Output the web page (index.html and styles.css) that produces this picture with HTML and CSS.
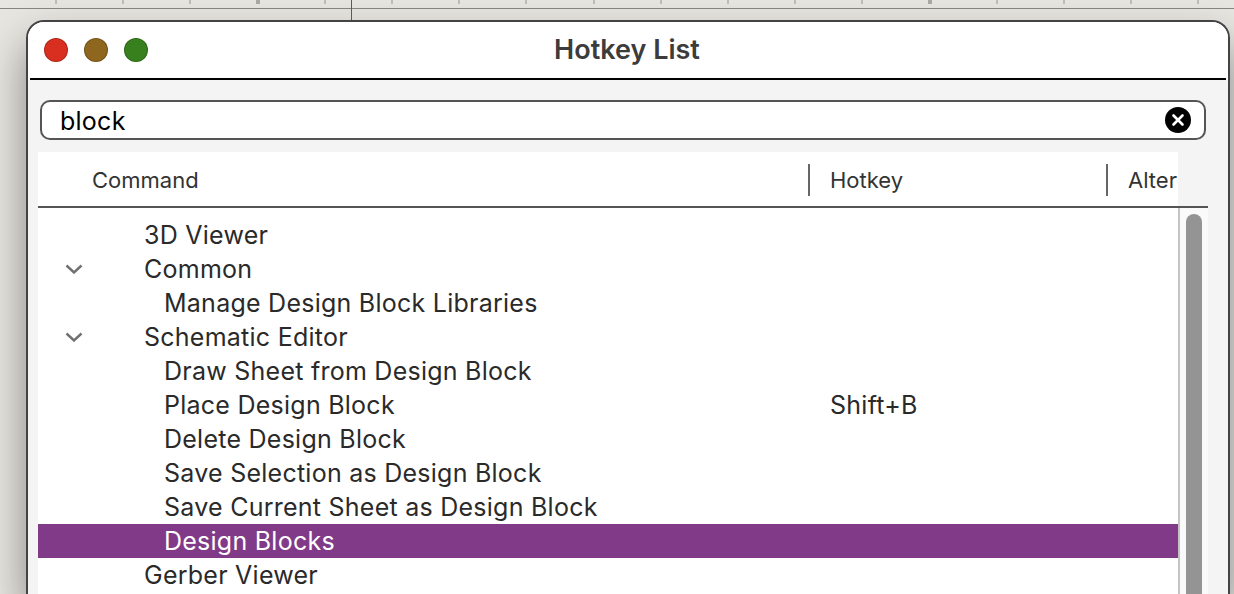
FILE: index.html
```html
<!DOCTYPE html>
<html lang="en">
<head>
    <meta charset="UTF-8">
    <meta name="viewport" content="width=device-width, initial-scale=1.0">
    <title>Hotkey List</title>
    <link rel="stylesheet" href="styles.css">
</head>
<body>
    <!-- Ruler of the editor behind the dialog -->
    <div class="ruler">
        <div class="ruler-half ruler-left">
            <i class="tick"></i><i class="tick"></i><i class="tick"></i><i class="tick major"></i><i class="tick"></i>
        </div>
        <div class="ruler-half ruler-right">
            <i class="tick"></i><i class="tick"></i><i class="tick"></i><i class="tick"></i><i class="tick"></i><i class="tick"></i><i class="tick"></i><i class="tick"></i><i class="tick major"></i><i class="tick"></i><i class="tick"></i><i class="tick"></i><i class="tick"></i>
        </div>
    </div>

    <div class="window">
        <div class="titlebar">
            <div class="lights">
                <span class="light red"></span>
                <span class="light amber"></span>
                <span class="light green"></span>
            </div>
            <div class="title">Hotkey List</div>
        </div>

        <div class="content">
            <div class="search">
                <span class="search-text">block</span>
                <svg class="clear" width="26" height="26" viewBox="0 0 26 26">
                    <circle cx="13" cy="13" r="13" fill="#000"/>
                    <path d="M8.5 8.5 17.5 17.5M17.5 8.5 8.5 17.5" stroke="#fff" stroke-width="2.6" stroke-linecap="round"/>
                </svg>
            </div>

            <div class="table">
                <div class="table-head">
                    <div class="col col-command">Command</div>
                    <div class="col col-hotkey">Hotkey</div>
                    <div class="col col-alt">Alter</div>
                </div>
                <div class="table-body">
                    <div class="rows">
                        <div class="row top"><span class="name">3D Viewer</span></div>
                        <div class="row top">
                            <svg class="chevron" width="18" height="10" viewBox="0 0 18 10"><path d="M1.5 1.5 9 8.5 16.5 1.5" fill="none" stroke="#707070" stroke-width="2.4"/></svg>
                            <span class="name">Common</span>
                        </div>
                        <div class="row child"><span class="name">Manage Design Block Libraries</span></div>
                        <div class="row top">
                            <svg class="chevron" width="18" height="10" viewBox="0 0 18 10"><path d="M1.5 1.5 9 8.5 16.5 1.5" fill="none" stroke="#707070" stroke-width="2.4"/></svg>
                            <span class="name">Schematic Editor</span>
                        </div>
                        <div class="row child"><span class="name">Draw Sheet from Design Block</span></div>
                        <div class="row child"><span class="name">Place Design Block</span><span class="key">Shift+B</span></div>
                        <div class="row child"><span class="name">Delete Design Block</span></div>
                        <div class="row child"><span class="name">Save Selection as Design Block</span></div>
                        <div class="row child"><span class="name">Save Current Sheet as Design Block</span></div>
                        <div class="row child selected"><span class="name">Design Blocks</span></div>
                        <div class="row top"><span class="name">Gerber Viewer</span></div>
                    </div>
                    <div class="scrollbar"><div class="thumb"></div></div>
                </div>
            </div>
        </div>
    </div>
</body>
</html>
```

FILE: styles.css
```css
* {
    box-sizing: border-box;
}
body {
    margin: 0;
    height: 594px;
    overflow: hidden;
    background: #e8e6e1;
    font-family: Inter, "Liberation Sans", sans-serif;
    color: #2a2a2a;
}

/* ruler */
.ruler {
    display: flex;
    height: 20px;
}
.ruler-half {
    display: flex;
    height: 9px;
    border-bottom: 1px solid #85857f;
}
.ruler-left {
    width: 352px;
    padding-left: 55px;
    position: relative;
}
/* cursor line running down to the dialog */
.ruler-left::after {
    content: "";
    position: absolute;
    right: 0;
    top: 0;
    width: 1px;
    height: 20px;
    background: #5c5c56;
}
.ruler-right {
    flex: 1;
    padding-left: 39px;
}
.tick {
    flex: none;
    width: 2px;
    height: 4px;
    margin-right: 65.2px;
    background: #bcbcb8;
}
.tick.major {
    width: 4px;
    margin-left: -1px;
    margin-right: 64.2px;
    background: #a8a8a4;
}

/* window */
.window {
    width: 1204px;
    height: 574px;
    margin-left: 26px;
    border: 2px solid #444;
    border-bottom: 0;
    border-radius: 18px 18px 0 0;
    background: #f4f4f4;
    box-shadow: 0 22px 44px rgba(0,0,0,0.42);
}
.titlebar {
    position: relative;
    display: flex;
    align-items: center;
    justify-content: center;
    height: 58px;
    padding: 0 2px 3px 0;
    border-radius: 16px 16px 0 0;
    background: linear-gradient(#000, #000) no-repeat center bottom / calc(100% - 4px) 2px, #fff;
}
.lights {
    position: absolute;
    left: 16px;
    top: 16px;
    display: flex;
    gap: 16px;
}
.light {
    width: 24px;
    height: 24px;
    border-radius: 50%;
    border: 1px solid rgba(0,0,0,0.2);
}
.red { background: #d92f20; }
.amber { background: #8f661d; }
.green { background: #38801e; }
.title {
    font-size: 27px;
    font-weight: 600;
    color: #3c3c3c;
}

.content {
    padding: 20px 20px 0 10px;
}
.search {
    display: flex;
    align-items: center;
    justify-content: space-between;
    width: 1166px;
    height: 40px;
    margin-left: 2px;
    padding: 0 13px 0 18px;
    background: #fff;
    border: 2px solid #555;
    border-radius: 10px;
    font-size: 25px;
    letter-spacing: 0.25px;
    color: #000;
}
.search-text {
    padding-top: 2px;
}

/* table */
.table {
    margin-top: 12px;
}
.table-head {
    display: flex;
    width: 1140px;
    height: 54px;
    padding-top: 1px;
    align-items: center;
    background: #fff;
    font-size: 22px;
    color: #333;
    overflow: hidden;
}
.col {
    height: 32px;
    line-height: 32px;
    white-space: nowrap;
}
.col-command {
    width: 770px;
    padding-left: 54px;
}
.col-hotkey {
    width: 298px;
    padding-left: 20px;
    border-left: 2px solid #666;
}
.col-alt {
    flex: 1;
    padding-left: 20px;
    border-left: 2px solid #666;
}
.table-body {
    display: flex;
    width: 1170px;
    height: 388px;
    border-top: 2px solid #555;
    background: #fff;
    overflow: hidden;
}
.rows {
    width: 1140px;
    padding-top: 10px;
    font-size: 25px;
    letter-spacing: 0.25px;
    flex: none;
}
.row {
    position: relative;
    display: flex;
    align-items: center;
    height: 34px;
    white-space: nowrap;
}
.row.top .name {
    margin-left: 106px;
}
.row.child .name {
    margin-left: 126px;
}
.row.selected {
    background: #803a87;
    color: #fff;
}
.key {
    position: absolute;
    left: 792px;
}
.chevron {
    position: absolute;
    left: 27px;
    top: 12px;
}
.scrollbar {
    flex: 1;
    padding: 6px 6px 0 6px;
    background: #fafafa;
    border-left: 2px solid #c4c4c4;
    border-right: 2px solid #c4c4c4;
}
.thumb {
    width: 16px;
    height: 500px;
    border-radius: 8px;
    background: #949494;
}
```
